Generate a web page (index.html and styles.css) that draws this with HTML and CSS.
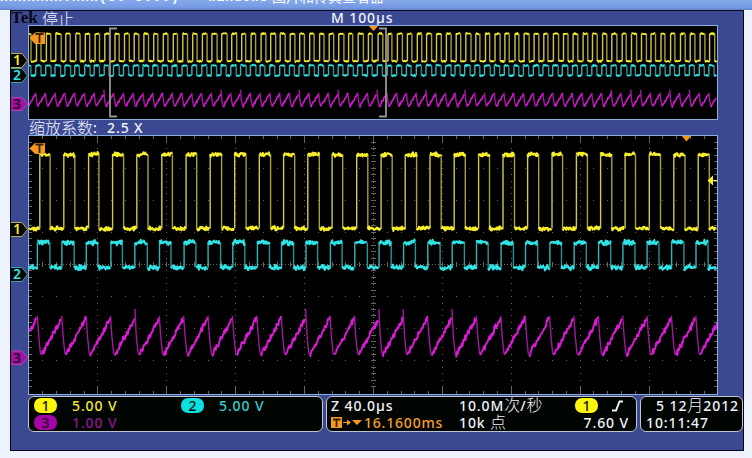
FILE: index.html
```
<!DOCTYPE html>
<html lang="zh-CN">
<head>
    <meta charset="UTF-8">
    <meta name="viewport" content="width=device-width, initial-scale=1.0">
    <title>Tek</title>
    <link rel="stylesheet" href="styles.css">
</head>
<body>
    <div class="titlebar"><span class="file">nnnnnnn.nnn(50 5000)</span><span class="app">Windows</span><span class="viewer">图片和传真查看器</span></div>

    <div class="scope">
        <div class="header">
            <span class="brand">Tek</span>
            <span class="cjk">停止</span>
            <span class="timebase">M 100µs</span>
        </div>

        <div class="row">
            <svg class="gutter" width="17" height="95" viewBox="11 25 17 95">
                <path class="tag tag1" d="M10 53.5H22L27.5 60.5L22 67.5H10"/>
                <text class="tag-text yellow" x="17" y="65">1</text>
                <path class="tag tag2" d="M10 68.5H22L27.5 75.5L22 82.5H10"/>
                <text class="tag-text cyan" x="17" y="80">2</text>
                <path class="tag tag3" d="M10 97.5H22L27.5 104L22 110.5H10"/>
                <text class="tag-text dark" x="17" y="109">3</text>
            </svg>
            <svg class="plot" width="690" height="95" viewBox="28 25 690 95">
                <g id="overview"></g>
                <path class="bracket" d="M117 28.5H110V116.5H117M379 28.5H386V116.5H379"/>
                <path class="orange" d="M29.5 38L35 32.5H45V44H35Z"/>
                <path class="t-mark" d="M35.5 34H43.5M39.5 34V43"/>
                <path class="orange" d="M368.5 25.5H378.5L373.5 31Z"/>
                <rect class="frame" x="28.5" y="25.5" width="689" height="94"/>
            </svg>
        </div>

        <div class="zoom"><span class="cjk">缩放系数</span><span class="colon">:</span><span>2.5 X</span></div>

        <div class="row">
            <svg class="gutter" width="17" height="260" viewBox="11 135 17 260">
                <path class="tag tag1" d="M10 222.5H22L27.5 229.5L22 236.5H10"/>
                <text class="tag-text yellow" x="17" y="234">1</text>
                <path class="tag tag2" d="M10 267.5H22L27.5 274.5L22 281.5H10"/>
                <text class="tag-text cyan" x="17" y="279">2</text>
                <path class="tag tag3" d="M10 351H22L27.5 357.5L22 364.5H10"/>
                <text class="tag-text dark" x="17" y="362.5">3</text>
            </svg>
            <svg class="plot" width="690" height="260" viewBox="28 135 690 260">
                <g id="grid"></g>
                <g id="main"></g>
                <path class="orange" d="M29.5 148.5L35 143H45V154H35Z"/>
                <path class="t-mark" d="M35.5 144.5H43.5M39.5 144.5V153"/>
                <path class="orange" d="M681.5 135.5H691.5L686.5 141.5Z"/>
                <path class="level" d="M707.5 180.5L713 175.5V180H718V181H713V185.5Z"/>
                <rect class="frame" x="28.5" y="135.5" width="689" height="259"/>
            </svg>
        </div>

        <div class="status">
            <div class="box channels">
                <span class="badge b1">1</span><span class="yellow">5.00 V</span>
                <span class="badge b2">2</span><span class="cyan2">5.00 V</span>
                <span class="badge b3">3</span><span class="magenta">1.00 V</span>
            </div>
            <div class="box horizontal">
                <span>Z 40.0µs</span>
                <span>10.0M<span class="cjk">次</span>/<span class="cjk">秒</span></span>
                <span class="trigger"><span class="badge b1">1</span>
                    <svg width="14" height="12" viewBox="0 0 14 12"><path class="edge" d="M1 10.5H5L8.5 1.5H12"/></svg>
                </span>
                <span class="delay">
                    <svg width="32" height="13" viewBox="0 0 32 13">
                        <rect class="orange" x="0" y="1" width="11" height="11"/>
                        <path class="t-mark" d="M2 3.5H9.500M5.500 3.500V11"/>
                        <path class="orange" d="M12 6H16V3.500L20 6.500L16 9.500V7H12ZM21 4H31L26 9Z"/>
                    </svg>16.1600ms</span>
                <span>10k <span class="cjk">点</span></span>
                <span class="volts">7.60 V</span>
            </div>
            <div class="box clock">
                <span class="date">5 12<span class="cjk">月</span>2012</span>
                <span>10:11:47</span>
            </div>
        </div>
    </div>

    <script src="script.js"></script>
</body>
</html>
```
FILE: styles.css
```
body {
    margin: 0;
    height: 458px;
    overflow: hidden;
    background-color: #edf2fc;
    font-family: "Noto Sans", "Noto Sans CJK SC", sans-serif;
    font-size: 14px;
    font-weight: 500;
    letter-spacing: 0.9px;
    color: #f0f2fa;
}

.titlebar {
    display: flex;
    align-items: flex-end;
    height: 10px;
    overflow: hidden;
    background: linear-gradient(#86a9ec, #769be3 70%, #6685d0);
    font-family: "Liberation Mono", "Noto Sans CJK SC", monospace;
    font-size: 13px;
    font-weight: bold;
    line-height: 16px;
    letter-spacing: 0;
    white-space: pre;
    color: #fff;
}

.titlebar span {
    margin-bottom: 4px;
}

.titlebar .file {
    width: 208px;
    letter-spacing: 1.2px;
}

.titlebar .app {
    width: 64px;
    letter-spacing: 0.8px;
}

.titlebar .viewer {
    font-size: 14px;
    font-weight: normal;
}

.scope {
    box-sizing: border-box;
    width: 734px;
    height: 441px;
    margin-left: 10px;
    border: 1px solid #05051c;
    background-color: #3b4993;
}

.header {
    display: flex;
    align-items: center;
    height: 14px;
    white-space: pre;
}

.brand {
    width: 31px;
    font-family: "Liberation Serif", serif;
    font-size: 17px;
    font-weight: bold;
    letter-spacing: 0;
    line-height: 14px;
    color: #080812;
}

.cjk {
    font-family: "Noto Sans CJK SC", sans-serif;
    font-size: 16px;
    font-weight: 300;
    letter-spacing: 0;
    line-height: 14px;
}

.timebase {
    margin-left: 257px;
    line-height: 14px;
}

.row {
    display: flex;
}

.gutter, .plot {
    display: block;
}

.plot {
    background-color: #000;
}

.zoom {
    display: flex;
    height: 15px;
    padding-left: 18px;
    line-height: 15px;
    white-space: pre;
}

.colon {
    width: 14px;
}

.frame {
    fill: none;
    stroke: #8aaedb;
}

.bracket {
    fill: none;
    stroke: #969490;
    stroke-width: 1.8;
}

.orange {
    fill: #f39a1e;
}

.t-mark {
    fill: none;
    stroke: #38200a;
    stroke-width: 1.8;
}

.level {
    fill: #f8f42c;
}

.grid-dot {
    fill: #66665a;
}

.tag {
    fill: #050805;
}

.tag1 { stroke: #b5b04a; }
.tag2 { stroke: #3aa3ae; }
.tag3 { stroke: #b73fba; fill: #a0129f; }

.tag-text {
    font-size: 14px;
    font-weight: 600;
    letter-spacing: 0;
    text-anchor: middle;
}

.tag-text.yellow { fill: #f4ee35; }
.tag-text.cyan { fill: #35dfe6; }
.tag-text.dark { fill: #2b0730; }

.flat, .fall, .rise {
    fill: none;
    stroke-linejoin: round;
}

.flat { stroke-width: 2.1; }
.rise { stroke-width: 1.4; }
.fall { stroke-width: 1.4; opacity: 0.8; }
.small .flat { stroke-width: 1.7; }

.ch1 .flat { stroke: #f7f02b; }
.ch1 .rise, .ch1 .fall { stroke: #d0c74c; }
.ch2 .flat { stroke: #2fe3e6; }
.ch2 .rise, .ch2 .fall { stroke: #35b4b8; }
.ch3 .flat { stroke: #dc1bd7; stroke-width: 1.9; }
.ch3 .fall { stroke: #c81fc6; }
.small .ch3 .flat { stroke-width: 1.5; }

/* bottom readouts */
.status {
    display: flex;
    gap: 3px;
    margin: 1px 0 0 17px;
}

.box {
    display: grid;
    box-sizing: border-box;
    grid-template-rows: 17px 17px;
    align-items: center;
    height: 36px;
    border: 1px solid #bcc6d4;
    border-radius: 6px;
    background-color: #010501;
    line-height: 17px;
    white-space: nowrap;
}

.channels {
    grid-template-columns: 38px 109px 38px 1fr;
    width: 295px;
    padding-left: 5px;
}

.horizontal {
    grid-template-columns: 128px 116px 1fr;
    width: 311px;
    padding-left: 4px;
}

.clock {
    width: 103px;
    padding: 0 3px 0 5px;
}

.date {
    justify-self: end;
}

.trigger {
    display: flex;
    gap: 13px;
    align-items: center;
}

.delay {
    display: flex;
    gap: 1px;
    align-items: center;
    letter-spacing: 0.8px;
    color: #f5a02c;
}

.volts {
    justify-self: end;
    padding-right: 7px;
}

.badge {
    width: 23px;
    height: 15px;
    border-radius: 7px;
    line-height: 15px;
    letter-spacing: 0;
    text-align: center;
    color: #14140a;
}

.b1 { background-color: #fbf70a; }
.b2 { background-color: #0be0e0; }
.b3 { background-color: #a505a4; color: #2b0730; }

.box .yellow { color: #f0ea35; }
.box .cyan2 { color: #35cdd0; }
.box .magenta { color: #8f1690; }

.edge {
    fill: none;
    stroke: #f0f2fa;
    stroke-width: 1.9;
}
```
FILE: script.js
```
const LEFT = 29;
const RIGHT = 717;

let seed = 7;
function rand() {
    seed = (seed * 16807) % 2147483647;
    return seed / 2147483647;
}

function noise(amount) {
    return (rand() + rand() - 1) * amount;
}

function path(cls, points) {
    if (points.length < 2) return "";
    const d = points.map(p => p[0].toFixed(1) + " " + p[1].toFixed(1)).join("L");
    return `<path class="${cls}" d="M${d}"/>`;
}

// noisy segment, clipped to the plot
function segment(x1, y1, x2, y2, amount) {
    const points = [];
    for (let x = Math.max(x1, LEFT); x <= Math.min(x2, RIGHT); x += 0.6) {
        points.push([x, y1 + (y2 - y1) * (x - x1) / (x2 - x1) + noise(amount)]);
    }
    return path("flat", points);
}

function vertical(cls, x, y1, y2) {
    if (x < LEFT || x > RIGHT) return "";
    return path(cls, [[x, y1], [x, y2]]);
}

function square(ch, start, period, width, high, low, amount) {
    let out = "";
    for (let x = start; x < RIGHT + period; x += period) {
        const r = x + noise(0.4);
        const f = x + width + noise(0.7);
        out += vertical("rise", r, low, high);
        out += vertical("fall", f, high, low);
        out += segment(r, high, f, high, amount);
        out += segment(f, low, x + period, low, amount);
    }
    return `<g class="${ch}">${out}</g>`;
}

function saw(start, period, drop, high, low, amount) {
    let out = "";
    for (let x = start; x < RIGHT + period; x += period) {
        const top = high - (rand() > 0.8 ? amount * 2.5 : amount * 0.6);
        if (x > LEFT && x + drop < RIGHT) {
            out += path("fall", [[x, top], [x + drop * 0.35, (high + low) / 2], [x + drop * 0.75, low - 2], [x + drop, low]]);
        }
        out += segment(x + drop, low, x + period, high, amount);
    }
    return `<g class="ch3">${out}</g>`;
}

function dot(x, y, w = 1, h = 1) {
    return `<rect class="grid-dot" x="${Math.round(x)}" y="${Math.round(y)}" width="${w}" height="${h}"/>`;
}

function grid() {
    const dx = 68.9, dy = 32.1, cx = 373, cy = 264;
    let out = "";
    for (let i = -4; i <= 4; i++) {
        for (let j = -19; j <= 19; j++) out += dot(cx + i * dx, cy + j * dy / 5);
        out += dot(cx + i * dx, 136, 1, 7) + dot(cx + i * dx, 387, 1, 7);
    }
    for (let i = -24; i <= 24; i++) {
        const x = cx + i * dx / 5;
        for (let j = -3; j <= 3; j++) out += dot(x, cy + j * dy);
        out += dot(x, 136, 1, 3) + dot(x, 391, 1, 3) + dot(x, cy - 2, 1, 5);
    }
    for (let j = -19; j <= 19; j++) {
        const y = cy + j * dy / 5;
        out += dot(29, y, 3) + dot(714, y, 3) + dot(cx - 2, y, 5);
    }
    // centre axes
    for (let x = 30; x < 717; x += 3) out += dot(x, cy);
    for (let y = 137; y < 394; y += 3) out += dot(cx, y);
    return out;
}

document.getElementById("grid").innerHTML = grid();

document.getElementById("main").innerHTML =
    square("ch1", 39.6 - 24.39, 24.39, 11, 154.5, 228.5, 2.4) +
    square("ch2", 37.6 - 24.39, 24.39, 12, 242.5, 267.5, 3) +
    saw(37.3 - 24.39, 24.39, 4.2, 318, 355, 3.6);

const overview = document.getElementById("overview");
overview.setAttribute("class", "small");
overview.innerHTML =
    square("ch1", 114.6 - 9.756 * 9, 9.756, 4.6, 33.7, 61.2, 0.9) +
    square("ch2", 113.8 - 9.756 * 9, 9.756, 5.2, 65.4, 75.5, 1) +
    saw(113.7 - 9.756 * 9, 9.756, 2.2, 93.5, 106.5, 1.5);
```
